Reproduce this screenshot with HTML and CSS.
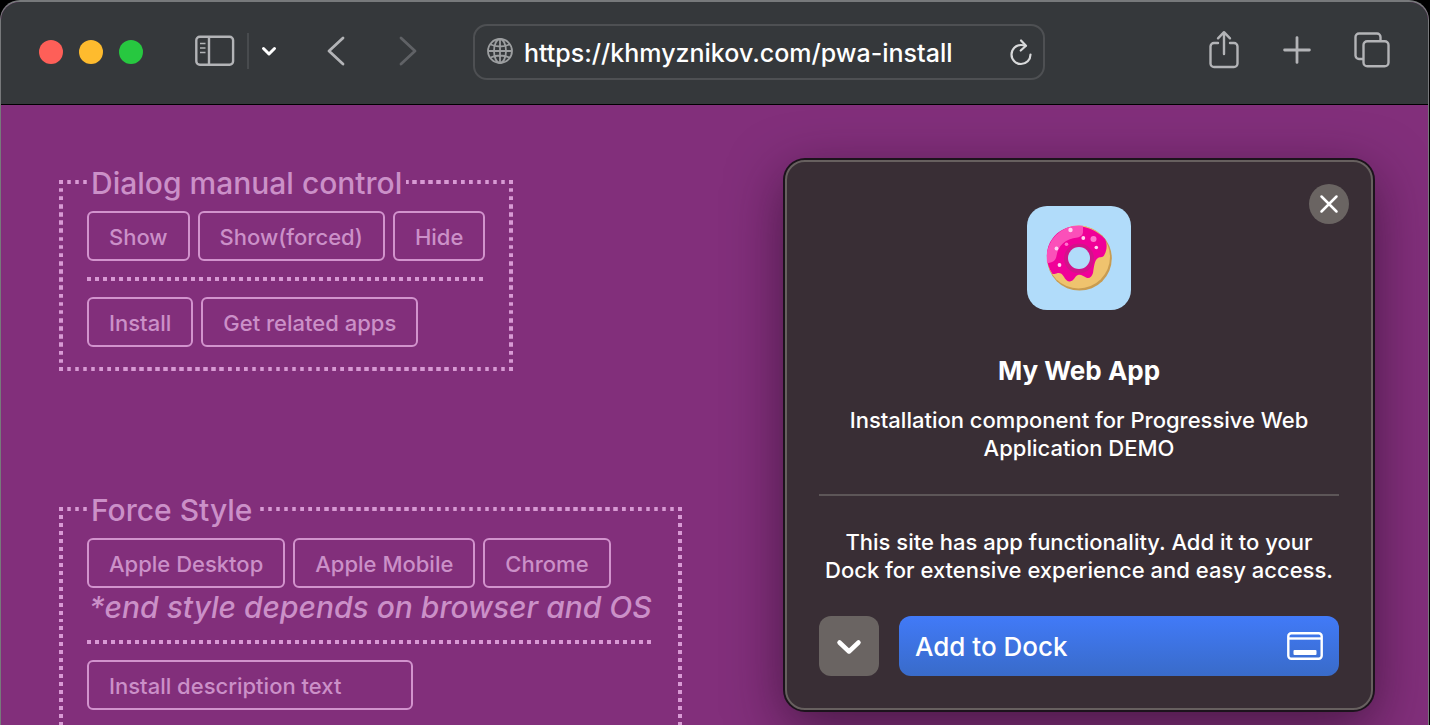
FILE: index.html
```html
<!DOCTYPE html>
<html lang="en">
<head>
<meta charset="utf-8">
<meta name="viewport" content="width=device-width, initial-scale=1">
<title>PWA Install</title>
<link rel="stylesheet" href="styles.css">
</head>
<body>
<div class="window">
  <header class="toolbar">
    <div class="lights">
      <button class="light light-close" aria-label="Close window"></button>
      <button class="light light-minimize" aria-label="Minimize window"></button>
      <button class="light light-zoom" aria-label="Zoom window"></button>
    </div>
    <div class="sidebar-tools">
      <button class="tool" aria-label="Show sidebar">
        <svg width="40" height="32" viewBox="0 0 40 32" fill="none" stroke="currentColor" stroke-width="2.4"><rect x="1.3" y="1.7" width="36.8" height="28" rx="3.5"/><path d="M14 2v28"/><path d="M5 8.5h5.5M5 13h5.5M5 17.5h5.5" stroke-width="1.7"/></svg>
      </button>
      <span class="divider"></span>
      <button class="tool tool-bright" aria-label="Tab groups">
        <svg width="16" height="12" viewBox="0 0 16 12" fill="none" stroke="currentColor" stroke-width="3" stroke-linecap="round" stroke-linejoin="round"><path d="M2.5 3.500l5.5 5.500 5.500-5.500"/></svg>
      </button>
    </div>
    <nav class="history" aria-label="History">
      <button class="tool" aria-label="Back">
        <svg width="18" height="30" viewBox="0 0 18 30" fill="none" stroke="currentColor" stroke-width="2.800" stroke-linecap="round" stroke-linejoin="round"><path d="M16 2L2 15l14 13"/></svg>
      </button>
      <button class="tool tool-dim" aria-label="Forward" disabled>
        <svg width="18" height="30" viewBox="0 0 18 30" fill="none" stroke="currentColor" stroke-width="2.800" stroke-linecap="round" stroke-linejoin="round"><path d="M2 2l14 13L2 28"/></svg>
      </button>
    </nav>
    <div class="address">
      <svg class="globe" width="28" height="28" viewBox="0 0 28 28" fill="none" stroke="currentColor" stroke-width="1.800"><circle cx="14" cy="13" r="12"/><ellipse cx="14" cy="13" rx="6" ry="12"/><path d="M14 1v24M2 13h24M4.500 6.500q9.500 4 19 0M4.500 19.500q9.500-4 19 0"/></svg>
      <input class="url" type="text" aria-label="Address" value="https://khmyznikov.com/pwa-install" spellcheck="false">
      <button class="tool tool-reload" aria-label="Reload">
        <svg width="24" height="28" viewBox="0 0 24 28" fill="none" stroke="currentColor" stroke-width="2.200" stroke-linecap="round" stroke-linejoin="round"><path d="M21.500 16.500a9.500 9.500 0 1 1-9.500-9.500c1.500 0 3 .3 4.500.9"/><path d="M12 2.500l5 5.300-5.300 4.700"/></svg>
      </button>
    </div>
    <div class="actions">
      <button class="tool" aria-label="Share">
        <svg width="32" height="40" viewBox="0 0 32 40" fill="none" stroke="currentColor" stroke-width="2.400" stroke-linecap="round" stroke-linejoin="round"><path d="M10 13H6a3.500 3.500 0 0 0-3.500 3.500v17A3.500 3.500 0 0 0 6 37h20a3.500 3.500 0 0 0 3.500-3.500v-17a3.500 3.500 0 0 0-3.500-3.500h-4"/><path d="M16 24V2.500M10 8.300l6-6.100 6 6.100"/></svg>
      </button>
      <button class="tool" aria-label="New tab">
        <svg width="28" height="28" viewBox="0 0 28 28" fill="none" stroke="currentColor" stroke-width="2.800" stroke-linecap="round"><path d="M14 1.600v24.800M1.600 14h24.800"/></svg>
      </button>
      <button class="tool" aria-label="Tab overview">
        <svg width="36" height="36" viewBox="0 0 36 36" fill="none" stroke="currentColor" stroke-width="2.400" stroke-linejoin="round"><path d="M9 27H5a3.500 3.500 0 0 1-3.500-3.500V5A3.500 3.500 0 0 1 5 1.500h18A3.500 3.500 0 0 1 26.500 5v4"/><rect x="9.500" y="9.300" width="25" height="25" rx="3.800"/></svg>
      </button>
    </div>
  </header>

  <main class="page">
    <fieldset class="group">
      <legend class="legend">Dialog manual control</legend>
      <div class="row">
        <button class="btn">Show</button>
        <button class="btn">Show(forced)</button>
        <button class="btn">Hide</button>
      </div>
      <hr class="rule">
      <div class="row">
        <button class="btn">Install</button>
        <button class="btn">Get related apps</button>
      </div>
    </fieldset>

    <fieldset class="group">
      <legend class="legend">Force Style</legend>
      <div class="row">
        <button class="btn">Apple Desktop</button>
        <button class="btn">Apple Mobile</button>
        <button class="btn">Chrome</button>
      </div>
      <em class="note">*end style depends on browser and OS</em>
      <hr class="rule">
      <div class="row">
        <input class="btn field" type="text" aria-label="Install description text" placeholder="Install description text">
      </div>
    </fieldset>

    <section class="dialog" role="dialog" aria-labelledby="app-name">
      <button class="close" aria-label="Close dialog">
        <svg width="20" height="20" viewBox="0 0 20 20" fill="none" stroke="currentColor" stroke-width="2.500" stroke-linecap="round"><path d="M2.500 2.500l15 15M17.500 2.500l-15 15"/></svg>
      </button>
      <div class="app-icon">
        <svg width="104" height="104" viewBox="0 0 104 104">
          <defs><clipPath id="dough"><circle cx="52" cy="52" r="32.500"/></clipPath></defs>
          <circle cx="52.500" cy="52.300" r="32.300" fill="#c99c50"/>
          <circle cx="51.500" cy="51" r="31.500" fill="#efc36e"/>
          <path d="M25.500 68C18 57 18 42 25.500 32.500 36 18 60 14.500 78 33c2.500 5 2 11-.5 15.500-1 3.500-4 2-6.500 3.500-3.500 2-4 9-5 15-1.500 4.500-4 6-7 4.500-3-1.500-5-3.500-8-2.500-3 1-4 6-8 6.500-4.500.5-5.500-5.500-9-8-2-1.300-5 0-6.500.500z" fill="#f00098"/>
          <g clip-path="url(#dough)"><path d="M19.500 57V19h36.500v7c0 3-2.500 5-5.500 5.500C38 32.500 31 40 29.500 50c-.7 4.500-4 7-10 7z" fill="#fb50b9"/></g>
          <circle cx="52" cy="52.500" r="15" fill="#d3128a"/>
          <circle cx="52" cy="52" r="11" fill="#b1dcfa"/>
          <g fill="#ffd5f2"><circle cx="43.500" cy="24" r="2.200"/><circle cx="29.500" cy="42.500" r="1.900"/><circle cx="56.300" cy="32" r="1.900"/><circle cx="69.300" cy="41.500" r="1.800"/><circle cx="32.500" cy="59" r="1.900"/></g>
          <g fill="#ff74cd"><circle cx="66.500" cy="33" r="3"/><circle cx="39.500" cy="38.300" r="1.800"/></g>
        </svg>
      </div>
      <h1 class="app-name" id="app-name">My Web App</h1>
      <p class="text">Installation component for Progressive Web Application DEMO</p>
      <hr class="separator">
      <p class="text">This site has app functionality. Add it to your Dock for extensive experience and easy access.</p>
      <div class="dialog-actions">
        <button class="more" aria-label="More">
          <svg width="26" height="18" viewBox="0 0 26 18" fill="none" stroke="currentColor" stroke-width="4.500" stroke-linecap="round" stroke-linejoin="round"><path d="M3.500 5.500L13 14.500l9.500-9"/></svg>
        </button>
        <button class="add">
          <span>Add to Dock</span>
          <svg width="36" height="28" viewBox="0 0 36 28" fill="none" stroke="currentColor" stroke-width="2.400"><rect x="1.300" y="1.300" width="33.400" height="25.400" rx="3"/><path d="M2 6.500h32"/><rect x="6.500" y="18" width="23" height="5" rx="1" fill="currentColor" stroke="none"/></svg>
        </button>
      </div>
    </section>
  </main>
</div>
</body>
</html>
```
FILE: styles.css
```css
* {
  box-sizing: border-box;
}

body {
  margin: 0;
  background: #000;
  color: #fff;
  font-family: Inter, Roboto, sans-serif;
  font-weight: 500;
}

button,
input {
  margin: 0;
  padding: 0;
  border: 0;
  background: none;
  color: inherit;
  font: inherit;
}

.window {
  display: flex;
  flex-direction: column;
  height: 100vh;
  margin-right: 1px;
  overflow: hidden;
  border: 1px solid #77797b;
  border-top-width: 2px;
  border-bottom: 0;
  border-radius: 20px 20px 0 0;
  background: #822f7b;
}

/* Browser toolbar */

.toolbar {
  display: flex;
  flex: none;
  align-items: center;
  height: 103px;
  padding: 0 38px 3px;
  border-bottom: 1px solid #000;
  background: #35383b;
}

.lights {
  display: flex;
  gap: 16px;
}

.light {
  width: 24px;
  height: 24px;
  border-radius: 50%;
}

.light-close {
  background: #fe5f58;
}

.light-minimize {
  background: #febb2e;
}

.light-zoom {
  background: #27c840;
}

.tool {
  display: flex;
  color: #b3b4b7;
}

.tool-bright {
  color: #fff;
}

.tool-dim {
  color: #606266;
}

.tool-reload {
  color: #d8d9da;
}

.sidebar-tools {
  display: flex;
  align-items: center;
  gap: 12px;
  margin: 0 0 2px 52px;
}

.divider {
  width: 2px;
  height: 36px;
  background: #484b4e;
}

.history {
  display: flex;
  gap: 54px;
  margin: 0 56px 2px 50px;
}

.address {
  display: flex;
  flex: 0 1 572px;
  align-items: center;
  gap: 10px;
  min-width: 0;
  height: 56px;
  padding: 0 10px 0 11px;
  border: 2px solid #4e5053;
  border-radius: 14px;
}

.globe {
  flex: none;
  color: #9c9ea0;
}

.url {
  flex: 1;
  min-width: 0;
  padding-top: 2px;
  font-size: 25px;
  line-height: 32px;
  outline: 0;
}

.actions {
  display: flex;
  align-items: center;
  gap: 43px;
  margin: 0 0 3px auto;
}

/* Page */

.page {
  position: relative;
  display: flex;
  flex: 1;
  flex-direction: column;
  align-items: flex-start;
  gap: 119px;
  min-height: 0;
  padding: 58px;
  overflow: hidden;
  color: #cb90c8;
}

.group {
  flex: none;
  min-width: 0;
  margin: 0;
  padding: 10px 24px 20px;
  border: 4px solid #d293cd;
  border-image: url("data:image/svg+xml,%3Csvg xmlns='http://www.w3.org/2000/svg' width='20' height='20' fill='%23d89ad4'%3E%3Cpath d='M0 0h4v4H0zM8 0h4v4H8zM16 0h4v4h-4zM0 8h4v4H0zM16 8h4v4h-4zM0 16h4v4H0zM8 16h4v4H8zM16 16h4v4h-4z'/%3E%3C/svg%3E") 6 / 6px round;
}

.legend {
  padding: 2px 4px 0;
  font-size: 30px;
  line-height: 36px;
}

.row {
  display: flex;
  gap: 8px;
}

.btn {
  height: 50px;
  padding: 1px 20px 0;
  border: 2px solid #d293cd;
  border-radius: 6px;
  font-size: 22px;
}

.rule {
  height: 4px;
  margin: 16px 0;
  border: 0;
  background: repeating-linear-gradient(90deg, #d89ad4 0 4px, transparent 4px 8px);
}

.note {
  display: block;
  padding: 0 2px;
  font-size: 30px;
  line-height: 38px;
}

.note + .rule {
  margin-top: 14px;
}

.field {
  width: 326px;
}

.field::placeholder {
  color: inherit;
  opacity: 1;
}

/* Install dialog */

.dialog {
  position: absolute;
  top: 55px;
  right: 55px;
  display: flex;
  flex-direction: column;
  align-items: center;
  width: 588px;
  padding: 44px 32px 32px;
  border: 2px solid #67605f;
  border-radius: 20px;
  background: #392e35;
  box-shadow: 0 0 0 2px #1c131c, 0 16px 56px rgba(30, 8, 30, 0.6);
  color: #fff;
}

.close {
  position: absolute;
  top: 22px;
  right: 22px;
  display: grid;
  place-items: center;
  width: 40px;
  height: 40px;
  border-radius: 50%;
  background: #6a6462;
}

.app-icon {
  display: flex;
  overflow: hidden;
  border-radius: 20px;
  background: #b1dcfa;
}

.app-name {
  margin: 45px 0 19px;
  font-size: 26px;
  font-weight: 700;
  line-height: 32px;
}

.text {
  margin: 0;
  font-size: 22px;
  line-height: 28px;
  text-align: center;
}

.separator {
  width: 100%;
  margin: 32px 0;
  border: 0;
  border-top: 2px solid #5d5658;
}

.dialog-actions {
  display: flex;
  gap: 20px;
  width: 100%;
  margin-top: 32px;
}

.more {
  display: grid;
  place-items: center;
  width: 60px;
  height: 60px;
  border-radius: 12px;
  background: #6a6462;
}

.add {
  display: flex;
  flex: 1;
  align-items: center;
  justify-content: space-between;
  padding: 0 16px;
  border-radius: 12px;
  background: linear-gradient(#417af8, #396bc9);
  font-size: 26px;
}
```
